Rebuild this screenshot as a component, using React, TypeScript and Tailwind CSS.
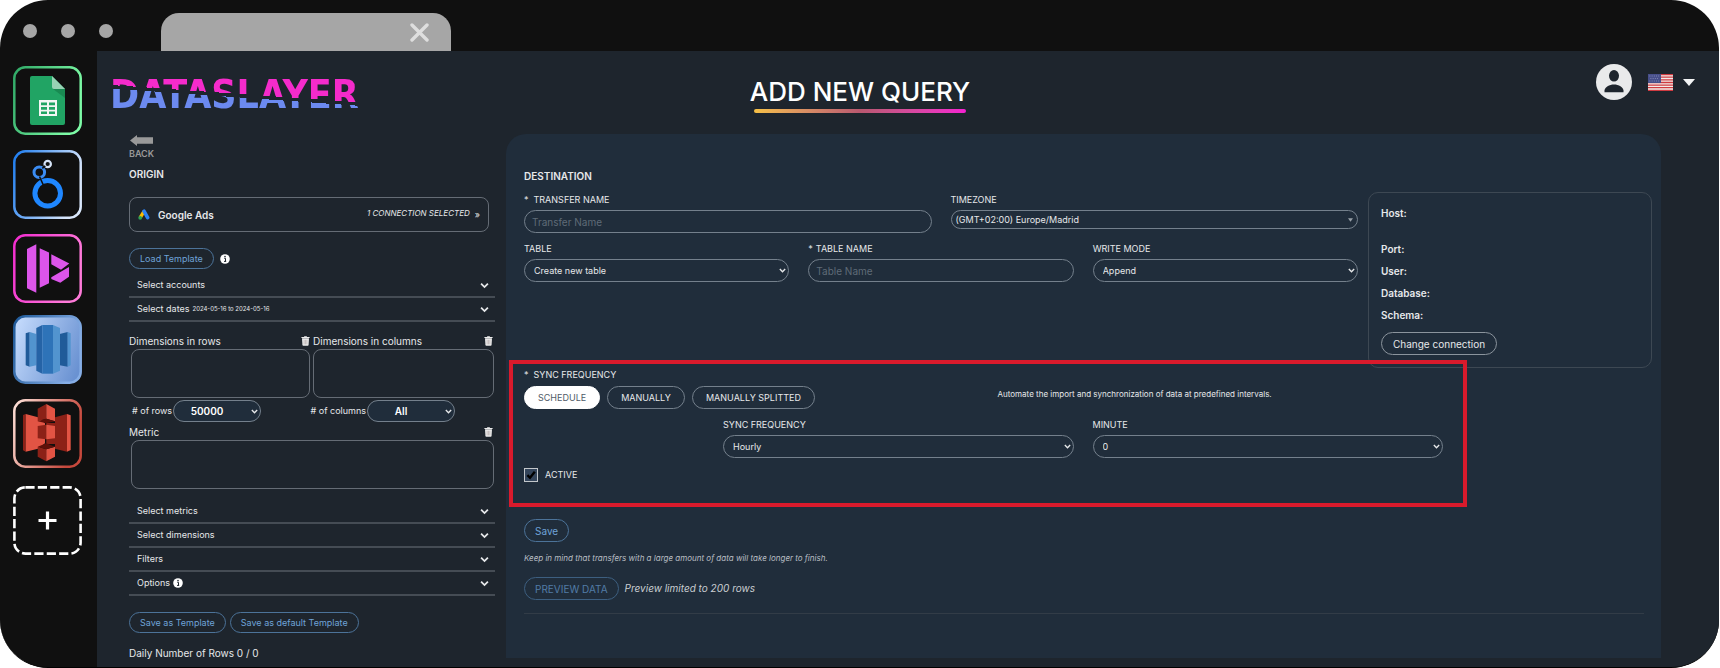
import { useId, useState, type ReactNode } from "react";

const fieldCls = "block w-full rounded-full border border-[#74808c] bg-transparent text-[#e6e8ea] leading-4 outline-none";
const outlineBtn = "rounded-full border border-[#4c7399] text-[#6fa3d8] leading-4 whitespace-nowrap";

function Chevron({ className }: { className: string }) {
  return (
    <svg viewBox="0 0 10 7" className={className} fill="none" stroke="currentColor" strokeWidth="2" aria-hidden="true">
      <path d="M1.2 1.4 5 5.2 8.8 1.4" />
    </svg>
  );
}

function InfoIcon() {
  return (
    <svg viewBox="0 0 10 10" className="size-[10px] shrink-0" aria-hidden="true">
      <circle cx="5" cy="5" r="4.8" fill="#fff" />
      <path d="M4.2 4.3h1.3v3M4 7.4h2.2" stroke="#1e252d" strokeWidth="1" fill="none" />
      <circle cx="5" cy="2.6" r=".8" fill="#1e252d" />
    </svg>
  );
}

function TrashButton({ label }: { label: string }) {
  return (
    <button type="button" aria-label={label} className="shrink-0">
      <svg viewBox="0 0 9 11" className="h-[10px] w-[9px]" aria-hidden="true">
        <path d="M0 1.2h2.7L3.3.3h2.4l.6.9H9v1H0z" fill="#ececec" />
        <path d="M.7 2.6h7.6L7.9 10q-.1.8-.9.8H2q-.8 0-.9-.8z" fill="#ececec" />
        <path d="M3 4.2v5M4.5 4.2v5M6 4.2v5" stroke="#a89c9c" strokeWidth=".6" />
      </svg>
    </button>
  );
}

function Tile({ label, from, to, fill = "none", children }: { label: string; from: string; to: string; fill?: string; children: ReactNode }) {
  const id = useId();
  return (
    <a href="#" aria-label={label} className="block">
      <svg viewBox="0 0 69 69" className="size-[69px]" aria-hidden="true">
        <defs>
          <linearGradient id={id} x1="0" y1="0" x2="1" y2=".35">
            <stop offset="0" stopColor={from} />
            <stop offset="1" stopColor={to} />
          </linearGradient>
          <linearGradient id="sky" x1="0" y1=".3" x2="1" y2=".7">
            <stop offset="0" stopColor="#c0d7fa" />
            <stop offset="1" stopColor="#6a92d2" />
          </linearGradient>
        </defs>
        <rect x="1.3" y="1.3" width="66.4" height="66.4" rx="11" fill={fill} stroke={`url(#${id})`} strokeWidth="2.5" />
        {children}
      </svg>
    </a>
  );
}

function Sidebar() {
  return (
    <nav aria-label="Destinations" className="w-[97px] shrink-0 pl-[13px] pt-[15px]">
      <div className="flex flex-col gap-[15px]">
        <Tile label="Google Sheets" from="#2fa866" to="#7dfba6">
          <path d="M19 10h20l13 13v34q0 2-2 2H19q-2 0-2-2V12q0-2 2-2z" fill="#21a464" />
          <path d="M40 23h12v9z" fill="#198a52" />
          <path d="M39 10l13 13H41q-2 0-2-2z" fill="#97d2b4" />
          <path d="M26 34h18v16H26z" fill="#f4f6f5" />
          <path d="M28 36.5h6v2.8h-6zM36 36.5h6v2.8h-6zM28 41h6v2.8h-6zM36 41h6v2.8h-6zM28 45.4h6v2.6h-6zM36 45.4h6v2.6h-6z" fill="#21a464" />
        </Tile>
        <Tile label="Looker Studio" from="#1c7cf0" to="#d8e6fb">
          <g fill="none">
            <circle cx="34.7" cy="43.3" r="12.8" stroke="#1f87ff" strokeWidth="5" />
            <circle cx="26.3" cy="22.3" r="5.3" stroke="#3b8cf2" strokeWidth="3" />
            <circle cx="34.7" cy="14" r="3.2" stroke="#d6e4f8" strokeWidth="2.2" />
            <path d="M26.5 26.5l3.8 8.5M29.3 18.3l3-2.4" stroke="#101010" strokeWidth="1.6" />
          </g>
        </Tile>
        <Tile label="Dataslayer" from="#f32bd0" to="#ff7ad9">
          <path
            d="M14 15l9.3-4.7v48.4L14 54.3zM26.7 14.3l9.3 4.2v30.8l-9.3 4.4zM38.3 20.3l18 9.2-8.3 6.2-9.7-5.4zM38.3 43.3 56 33v9.7l-8.7 6-9-3.7z"
            fill="#dc55ea"
          />
        </Tile>
      </div>
      <div className="mt-3 flex flex-col gap-[15px]">
        <Tile label="Amazon Redshift" from="#1c5796" to="#86aee6" fill="url(#sky)">
          <path d="M12.7 18.3l4-1.3v34.7l-4-1.4zM46.7 19l8-2v34.7l-8-1.4z" fill="#205b99" />
          <path d="M16.7 17l6.6 2v31.3l-6.6 1.4zM54.7 17l3 1.3v32l-3 1.4z" fill="#5294cf" />
          <path d="M23.3 13l6-3v48.7l-6-3z" fill="#2563a6" />
          <path d="M29.3 10H40v48.7H29.3z" fill="#2e73b8" />
          <path d="M40 10l7 3v42.7l-7 3z" fill="#5294cf" />
        </Tile>
        <Tile label="Amazon S3" from="#ffe3da" to="#c6483c">
          <path d="M10 16l2.7-1v37.7l-2.7-1.4zM42 18.3 54 15v37.7l-12-3z" fill="#8c2117" />
          <path d="M12.7 15 25 18.3l7 6v20l-7 5.4-12.3 3zM54 15l3.7 1.3V51L54 52.7z" fill="#e25444" />
          <path d="M33.3 24H42v21h-8.7z" fill="#8c2117" />
          <path d="M24.7 9.7 33.3 5v14.7l-8.6 2.6zM24.7 27l8.6-1.3v14.6l-8.6-1zM24.7 47.7l8.6 2.6v12L24.7 57.7z" fill="#8c2117" />
          <path d="M33.3 5 42 9.7v12.6l-8.7-2.6zM33.3 25.7 42 27v12.3l-8.7 1zM33.3 50.3l8.7-2.6v10l-8.7 4.6z" fill="#e25444" />
          <path d="M24.7 22.3l8.6-2.6 8.7 2.6-8.7 2zM24.7 47.7l8.6-3.4 8.7 3.4-8.7 2.6z" fill="#5e1009" />
        </Tile>
      </div>
      <button type="button" aria-label="Add destination" className="mt-[18px] block">
        <svg viewBox="0 0 69 69" className="size-[69px]" fill="none" stroke="#fff" aria-hidden="true">
          <rect x="1.4" y="1.4" width="66.2" height="66.2" rx="11" strokeWidth="2.6" strokeDasharray="9.2 3.2" />
          <path d="M34.5 25.5v18M25.5 34.5h18" strokeWidth="3.2" />
        </svg>
      </button>
    </nav>
  );
}

function AccordionRow({ title, detail, info }: { title: string; detail?: string; info?: boolean }) {
  const [open, setOpen] = useState(false);
  return (
    <button
      type="button"
      aria-expanded={open}
      onClick={() => setOpen(!open)}
      className="flex h-6 w-full items-center gap-[3px] border-b-2 border-[#454c54] pl-2 pr-[6px] text-left text-[9px]"
    >
      <span>{title}</span>
      {detail && <span className="text-[6px]">{detail}</span>}
      {info && <InfoIcon />}
      <Chevron className="ml-auto h-[7px] w-[9px]" />
    </button>
  );
}

function PillSelect({ label, value }: { label: string; value: string }) {
  return (
    <div className="flex items-center gap-px">
      <label htmlFor={label}>{label}</label>
      <span className="relative block w-[88px]">
        <select id={label} className="block h-[22px] w-full appearance-none rounded-full border border-[#74808c] bg-[#202d3b] pr-5 text-center text-[10px] font-semibold text-white">
          <option>{value}</option>
        </select>
        <Chevron className="pointer-events-none absolute right-[3px] top-[9px] h-[5px] w-[7px]" />
      </span>
    </div>
  );
}

function Field({ label, required, wide, children }: { label: string; required?: boolean; wide?: boolean; children: (id: string) => ReactNode }) {
  const id = useId();
  return (
    <div className="min-w-0 flex-1">
      <label htmlFor={id} className="block pb-[2px] text-[9px] leading-4">
        {required && <span className={wide ? "pr-[5px]" : "pr-[3px]"}>*</span>}
        {label}
      </label>
      {children(id)}
    </div>
  );
}

function SelectField({ label, value }: { label: string; value: string }) {
  return (
    <Field label={label}>
      {id => (
        <div className="relative">
          <select id={id} className={`${fieldCls} h-[23px] appearance-none pl-[9px] text-[9px]`}>
            <option>{value}</option>
          </select>
          <Chevron className="pointer-events-none absolute right-[3px] top-[9px] h-[5px] w-[7px]" />
        </div>
      )}
    </Field>
  );
}

function OriginPanel() {
  return (
    <section className="w-[409px] shrink-0 pl-8 pr-[11px] text-[10px] leading-4 text-[#e6e8ea]">
      <a href="#" className="inline-flex flex-col items-center pt-px text-[#999]">
        <svg viewBox="0 0 23 11" className="h-[11px] w-[23px]" aria-hidden="true">
          <path d="M0 5.5 7 0v2.3h16v6.4H7V11z" fill="#999" />
        </svg>
        <span className="text-[9px] font-semibold leading-4">BACK</span>
      </a>
      <h2 className="pt-1 text-[10px] font-semibold leading-4">ORIGIN</h2>

      <button type="button" className="mt-[15px] flex h-[35px] w-[360px] items-center rounded-lg border border-[#656c75] px-2 text-left">
        <svg viewBox="0 0 12 11" className="mr-2 h-[11px] w-3" aria-hidden="true">
          <path d="M6 2.4 2.2 8.6" stroke="#fbbc04" strokeWidth="3.4" />
          <path d="M6 2.2l3.6 6.4" stroke="#2c82f5" strokeWidth="3.6" strokeLinecap="round" />
          <circle cx="2.2" cy="8.8" r="1.9" fill="#2ea157" />
        </svg>
        <span className="font-semibold">Google Ads</span>
        <span className="ml-auto pb-1 text-[8px] italic">1 CONNECTION SELECTED</span>
        <span className="pl-[5px] text-[9px]">»</span>
      </button>

      <div className="mt-4 flex items-center gap-[6px]">
        <button type="button" className={`${outlineBtn} h-[21px] px-[10px] text-[9px]`}>Load Template</button>
        <InfoIcon />
      </div>

      <div className="pt-[5px]">
        <AccordionRow title="Select accounts" />
        <AccordionRow title="Select dates" detail="2024-05-16 to 2024-05-16" />
      </div>

      <div className="mt-[11px] flex gap-[3px] pr-px">
        <div className="flex-1">
          <div className="flex items-center justify-between">
            <span>Dimensions in rows</span>
            <TrashButton label="Clear dimensions in rows" />
          </div>
          <div className="ml-[2px] h-[49px] rounded-lg border border-[#656c75]" />
        </div>
        <div className="flex-1">
          <div className="flex items-center justify-between pr-px">
            <span>Dimensions in columns</span>
            <TrashButton label="Clear dimensions in columns" />
          </div>
          <div className="h-[49px] rounded-lg border border-[#656c75]" />
        </div>
      </div>

      <div className="mt-[2px] flex justify-between pl-[3px] pr-10 text-[9px]">
        <PillSelect label="# of rows" value="50000" />
        <PillSelect label="# of columns" value="All" />
      </div>

      <div className="mt-[2px] flex items-center justify-between pr-[2px]">
        <span>Metric</span>
        <TrashButton label="Clear metric" />
      </div>
      <div className="ml-[2px] mr-px h-[49px] rounded-lg border border-[#656c75]" />

      <div className="pt-[11px]">
        <AccordionRow title="Select metrics" />
        <AccordionRow title="Select dimensions" />
        <AccordionRow title="Filters" />
        <AccordionRow title="Options" info />
      </div>

      <div className="mt-4 flex gap-1">
        <button type="button" className={`${outlineBtn} h-[21px] px-[10px] text-[9px]`}>Save as Template</button>
        <button type="button" className={`${outlineBtn} h-[21px] px-[10px] text-[9px]`}>Save as default Template</button>
      </div>
      <p className="mt-3">Daily Number of Rows 0 / 0</p>
    </section>
  );
}

const modes = ["SCHEDULE", "MANUALLY", "MANUALLY SPLITTED"];
const connection = ["Port:", "User:", "Database:", "Schema:"];

function DestinationPanel() {
  const [mode, setMode] = useState("SCHEDULE");
  const [active, setActive] = useState(true);

  return (
    <section className="mb-[9px] mr-[58px] min-w-0 flex-1 rounded-t-[20px] bg-[#202d3b] pl-[18px] pr-[9px] pt-[34px] text-[#e6e8ea]">
      <h2 className="text-[10px] font-semibold leading-4">DESTINATION</h2>

      <div className="flex items-start gap-[10px] pt-2">
        <div className="flex flex-1 flex-col gap-2">
          <div className="flex gap-[19px]">
            <Field label="TRANSFER NAME" required wide>
              {id => <input id={id} type="text" placeholder="Transfer Name" className={`${fieldCls} h-[23px] px-[7px] text-[10px] placeholder:text-[#5f6b77]`} />}
            </Field>
            <Field label="TIMEZONE">
              {id => (
                <div className="relative">
                  <select id={id} className={`${fieldCls} h-[19px] appearance-none pl-1 text-[9px]`}>
                    <option>(GMT+02:00) Europe/Madrid</option>
                  </select>
                  <svg viewBox="0 0 6 4" className="pointer-events-none absolute right-[5px] top-2 h-1 w-[5px]" aria-hidden="true">
                    <path d="M0 0h6L3 4z" fill="#98a0a8" />
                  </svg>
                </div>
              )}
            </Field>
          </div>
          <div className="flex gap-[19px]">
            <SelectField label="TABLE" value="Create new table" />
            <Field label="TABLE NAME" required>
              {id => <input id={id} type="text" placeholder="Table Name" className={`${fieldCls} h-[23px] px-[7px] text-[10px] placeholder:text-[#5f6b77]`} />}
            </Field>
            <SelectField label="WRITE MODE" value="Append" />
          </div>
        </div>

        <aside className="h-[176px] w-[284px] shrink-0 rounded-[10px] border border-[#3d4853] pl-3 pt-[9px] text-[10px] font-semibold">
          <p className="mb-[14px] leading-[22px]">Host:</p>
          {connection.map(item => (
            <p key={item} className="leading-[22px]">{item}</p>
          ))}
          <button type="button" className="mt-[6px] h-[23px] rounded-full border border-[#8b949d] px-[11px] font-normal leading-4">Change connection</button>
        </aside>
      </div>

      <section className="relative -ml-[15px] -mt-2 mr-[185px] h-[147px] border-4 border-[#d91a2c] pl-[11px]">
        <h3 className="pt-[3px] text-[9px] font-normal leading-4">
          <span className="pr-[5px]">*</span>SYNC FREQUENCY
        </h3>
        <div className="mt-[3px] grid grid-cols-2 gap-2">
          <div className="flex gap-[7px]">
            {modes.map(item => (
              <button
                key={item}
                type="button"
                onClick={() => setMode(item)}
                className={`h-[23px] whitespace-nowrap rounded-full border px-[13px] text-[9px] leading-4 ${
                  item === mode ? "border-white bg-white text-[#4f5b68]" : "border-[#74808c]"
                }`}
              >
                {item}
              </button>
            ))}
          </div>
          <p className="text-[8px] leading-4">Automate the import and synchronization of data at predefined intervals.</p>
        </div>
        <div className="mt-2 flex gap-[19px] pl-[199px] pr-5">
          <SelectField label="SYNC FREQUENCY" value="Hourly" />
          <SelectField label="MINUTE" value="0" />
        </div>
        <label className="mt-[9px] flex w-fit items-center gap-[7px] text-[9px] leading-4">
          <span className="relative block size-[14px]">
            <input
              type="checkbox"
              checked={active}
              onChange={e => setActive(e.target.checked)}
              className="block size-[14px] appearance-none border border-[#c2c6ca] bg-[#33445a]"
            />
            {active && (
              <svg viewBox="0 0 14 14" className="pointer-events-none absolute inset-0 size-[14px]" aria-hidden="true">
                <path d="M3.4 7.2 6 9.8l4.8-6" fill="none" stroke="#000" strokeWidth="2.4" />
              </svg>
            )}
          </span>
          ACTIVE
        </label>
      </section>

      <button type="button" className={`${outlineBtn} mt-3 h-[23px] px-[10px] text-[10px]`}>Save</button>
      <p className="mt-2 text-[8px] italic leading-4 text-[#b9bec3]">
        Keep in mind that transfers with a large amount of data will take longer to finish.
      </p>
      <div className="mt-[11px] flex items-center gap-[6px]">
        <button type="button" className="h-[23px] rounded-full border border-[#3d5f80] px-[10px] text-[10px] leading-4 text-[#527ca6]">PREVIEW DATA</button>
        <span className="text-[10px] italic text-[#c9cdd1]">Preview limited to 200 rows</span>
      </div>
      <hr className="mr-2 mt-[13px] border-[#323c47]" />
    </section>
  );
}

function Header() {
  return (
    <header className="grid h-[83px] shrink-0 grid-cols-[1fr_auto_1fr] items-start pl-[13px] pr-6">
      <a
        href="#"
        className="mt-[18px] w-fit bg-[linear-gradient(184deg,#f52bcb_48%,transparent_48%,transparent_53%,#6c8af0_53%)] bg-clip-text font-['DejaVu_Sans_Condensed',sans-serif] text-[39px] font-bold leading-[52px] text-transparent"
      >
        DATASLAYER
      </a>
      <div className="mt-[25px] flex flex-col items-center pr-[85px]">
        <h1 className="whitespace-nowrap text-[26px] font-medium leading-8 text-white">ADD NEW QUERY</h1>
        <div className="mt-px h-1 w-[212px] rounded-full bg-linear-to-r from-[#f6c045] via-[#b9586f] to-[#f51fd0]" />
      </div>
      <div className="mt-[13px] flex items-center justify-end">
        <button type="button" aria-label="Account">
          <svg viewBox="0 0 36 36" className="size-9" aria-hidden="true">
            <circle cx="18" cy="18" r="18" fill="#e9eaeb" />
            <ellipse cx="18" cy="11.8" rx="5" ry="5.8" fill="#1e252d" />
            <path d="M8.5 28.2v-1.6c0-3.6 5-6.2 9.5-6.2s9.5 2.6 9.5 6.2v1.6z" fill="#1e252d" />
          </svg>
        </button>
        <button type="button" aria-label="Language" className="ml-4 flex items-center gap-[10px]">
          <svg viewBox="0 0 25 17" className="h-[17px] w-[25px]" aria-hidden="true">
            <path d="M0 0h25v17H0z" fill="#f3ece9" />
            <path d="M0 .6h25M0 3.2h25M0 5.8h25M0 8.5h25M0 11.1h25M0 13.7h25M0 16.3h25" stroke="#cf3a40" strokeWidth="1.3" />
            <path d="M0 0h13v9H0z" fill="#474f8a" />
            <path d="M1.5 2h10M2.5 4.5h8M1.5 7h10" stroke="#a9aed0" strokeWidth=".7" strokeDasharray=".8 1.4" />
          </svg>
          <svg viewBox="0 0 12 7" className="h-[7px] w-3" aria-hidden="true">
            <path d="M0 0h12L6 7z" fill="#f3f4f5" />
          </svg>
        </button>
      </div>
    </header>
  );
}

export default function App() {
  return (
    <div className="min-h-screen bg-white pr-px font-['Inter','Liberation_Sans',sans-serif]">
      <div className="flex min-h-screen flex-col overflow-hidden rounded-[48px] border-b border-black bg-[#101010]">
        <div className="flex h-[51px] shrink-0 items-end">
          <div className="flex gap-6 pb-[13px] pl-[23px]">
            <span className="size-[14px] rounded-full bg-[#a6a6a6]" />
            <span className="size-[14px] rounded-full bg-[#a6a6a6]" />
            <span className="size-[14px] rounded-full bg-[#a6a6a6]" />
          </div>
          <div className="ml-12 flex h-[38px] w-[290px] items-center justify-end rounded-t-[18px] bg-[#a6a6a6] pr-[22px]">
            <button type="button" aria-label="Close tab">
              <svg viewBox="0 0 19 19" className="size-[19px]" fill="none" stroke="#dedede" strokeWidth="3.4" strokeLinecap="round" aria-hidden="true">
                <path d="M2 2l15 15M17 2 2 17" />
              </svg>
            </button>
          </div>
        </div>
        <div className="flex flex-1">
          <Sidebar />
          <main className="flex min-w-0 flex-1 flex-col bg-[#1e252d]">
            <Header />
            <div className="flex flex-1">
              <OriginPanel />
              <DestinationPanel />
            </div>
          </main>
        </div>
      </div>
    </div>
  );
}
